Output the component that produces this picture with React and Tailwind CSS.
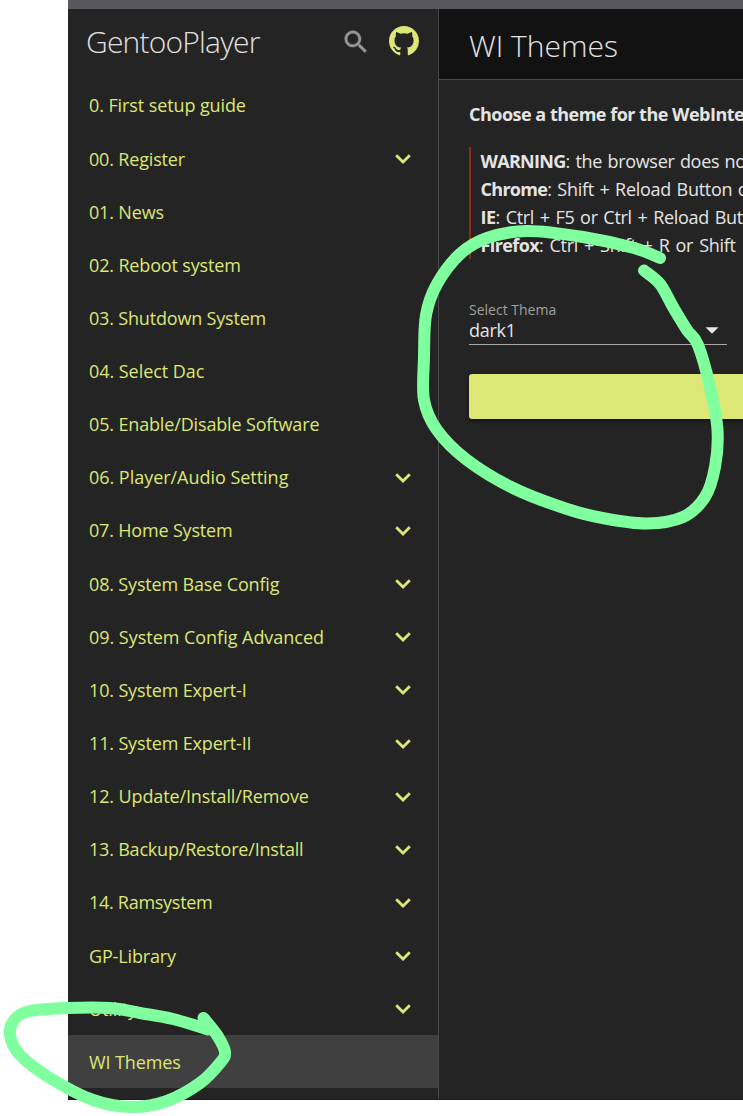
import React from "react";

const items = [
  { label: "0. First setup guide", track: "tracking-[-0.1px]" },
  { label: "00. Register", open: true, track: "tracking-[-0.17px]" },
  { label: "01. News", track: "tracking-[-0.17px]" },
  { label: "02. Reboot system", track: "tracking-[-0.15px]" },
  { label: "03. Shutdown System", track: "tracking-[-0.18px]" },
  { label: "04. Select Dac", track: "tracking-[-0.05px]" },
  { label: "05. Enable/Disable Software", track: "tracking-[-0.15px]" },
  { label: "06. Player/Audio Setting", open: true, track: "tracking-[-0.03px]" },
  { label: "07. Home System", open: true, track: "tracking-[-0.18px]" },
  { label: "08. System Base Config", open: true, track: "tracking-[-0.16px]" },
  { label: "09. System Config Advanced", open: true, track: "tracking-[-0.03px]" },
  { label: "10. System Expert-I", open: true, track: "tracking-[-0.15px]" },
  { label: "11. System Expert-II", open: true, track: "tracking-[-0.15px]" },
  { label: "12. Update/Install/Remove", open: true, track: "tracking-[-0.12px]" },
  { label: "13. Backup/Restore/Install", open: true, track: "tracking-[-0.2px]" },
  { label: "14. Ramsystem", open: true, track: "tracking-[-0.28px]" },
  { label: "GP-Library", open: true, track: "tracking-[-0.15px]" },
  { label: "Utility", open: true, track: "tracking-[-0.1px]" },
  { label: "WI Themes", active: true, track: "tracking-[-0.1px]" },
];

const selectLoop = [
  [660, 258], [634, 248], [583, 237], [527, 231], [487, 238], [460, 254], [437, 284],
  [426, 315], [424, 357], [424, 400], [437, 430], [467, 460], [513, 488], [567, 509],
  [605, 518.5], [647, 523.5], [683, 517], [705, 497], [715, 467], [717.5, 430], [710, 387],
  [698, 345], [687, 330], [673, 307], [660, 284], [644, 270.5],
];

const menuLoop = [
  [208, 1029.5], [173, 1019], [140, 1013], [110, 1008], [67, 1008], [30, 1011], [15, 1019],
  [10, 1035], [20, 1055], [50, 1078], [93, 1100], [132, 1107], [167, 1101], [200, 1083],
  [220, 1063], [225, 1052], [217, 1035], [203.5, 1018],
];

// Smooth curve through every point of a pen stroke.
function smooth(p) {
  let d = `M${p[0][0]} ${p[0][1]}`;
  for (let i = 0; i < p.length - 1; i++) {
    const a = p[i - 1] || p[i];
    const b = p[i];
    const c = p[i + 1];
    const e = p[i + 2] || c;
    d += `C${b[0] + (c[0] - a[0]) / 6} ${b[1] + (c[1] - a[1]) / 6} ${c[0] - (e[0] - b[0]) / 6} ${c[1] - (e[1] - b[1]) / 6} ${c[0]} ${c[1]}`;
  }
  return d;
}

function Chevron() {
  return (
    <svg className="mt-[2px] h-[10px] w-[16px] shrink-0" viewBox="0 0 16 10" fill="none" stroke="#dce775" strokeWidth="2.8">
      <path d="M1.2 1.3L8 8L14.8 1.3" />
    </svg>
  );
}

function Sidebar() {
  return (
    <nav className="box-content flex w-[370px] shrink-0 flex-col border-r border-[#484848]">
      <div className="flex h-[69.3px] shrink-0 items-center pl-[18px]">
        <h1 className="w-[255px] whitespace-nowrap pb-[5px] text-[30px] font-light tracking-[-0.8px] text-[#e0e0e0]">GentooPlayer</h1>
        <svg className="-mt-[4px] h-[30px] w-[30px] shrink-0" viewBox="0 0 24 24" fill="#969696" stroke="#969696" strokeWidth="0.4">
          <path d="M15.5 14h-.79l-.28-.27C15.41 12.59 16 11.11 16 9.5 16 5.91 13.09 3 9.5 3S3 5.91 3 9.5 5.91 16 9.5 16c1.61 0 3.09-.59 4.23-1.57l.27.28v.79l5 4.99L20.49 19l-4.99-5zm-6 0C7.01 14 5 11.99 5 9.5S7.01 5 9.5 5 14 7.01 14 9.5 11.99 14 9.5 14z" />
        </svg>
        <svg className="-mt-[6px] ml-[18px] h-[30px] w-[30px] shrink-0" viewBox="0 0 16 16" fill="#dce775">
          <path d="M8 0C3.58 0 0 3.58 0 8c0 3.54 2.29 6.53 5.47 7.59.4.07.55-.17.55-.38 0-.19-.01-.82-.01-1.49-2.01.37-2.53-.49-2.69-.94-.09-.23-.48-.94-.82-1.13-.28-.15-.68-.52-.01-.53.63-.01 1.08.58 1.23.82.72 1.21 1.87.87 2.33.66.07-.52.28-.87.51-1.07-1.78-.2-3.64-.89-3.64-3.95 0-.87.31-1.59.82-2.15-.08-.2-.36-1.02.08-2.12 0 0 .67-.21 2.2.82.64-.18 1.32-.27 2-.27s1.36.09 2 .27c1.53-1.04 2.2-.82 2.2-.82.44 1.1.16 1.92.08 2.12.51.56.82 1.27.82 2.15 0 3.07-1.87 3.75-3.65 3.95.29.25.54.73.54 1.48 0 1.07-.01 1.93-.01 2.2 0 .21.15.46.55.38A8.01 8.01 0 0 0 16 8c0-4.42-3.58-8-8-8z" />
        </svg>
      </div>
      {items.map((it) => (
        <div
          key={it.label}
          className={
            "flex h-[53.15px] shrink-0 items-center justify-between pl-[21px] pr-[27px] text-[18px] text-[#dce775] " +
            (it.active ? "bg-[#404040]" : "")
          }
        >
          <span className={"whitespace-nowrap pt-[2px] " + it.track}>{it.label}</span>
          {it.open && <Chevron />}
        </div>
      ))}
    </nav>
  );
}

function Main() {
  return (
    <main className="flex min-w-0 flex-1 flex-col overflow-hidden text-[18px] text-[#e4e4e4]">
      <header className="flex h-[71px] shrink-0 items-center border-b border-[#484848] bg-[#121212] pl-[30px]">
        <h2 className="whitespace-nowrap pt-[2px] text-[30px] font-light">WI Themes</h2>
      </header>
      <div className="flex w-[600px] flex-col pl-[30px]">
        <p className="mt-[20px] whitespace-nowrap leading-[28px] font-bold tracking-[-0.5px]">Choose a theme for the WebInterface</p>
        <div className="mt-[19px] h-[112px] whitespace-nowrap border-l-2 border-[#8e2a1a] pl-[9.5px] leading-[28px] tracking-[-0.3px]">
          <p className="[word-spacing:1px]"><b className="font-bold tracking-[-0.7px]">WARNING</b>: the browser does not reload</p>
          <p className="[word-spacing:1.3px]"><b className="font-bold tracking-[-0.7px]">Chrome</b>: Shift + Reload Button or</p>
          <p className="[word-spacing:1.3px]"><b className="font-bold tracking-[-0.5px]">IE</b>: Ctrl + F5 or Ctrl + Reload Button</p>
          <p className="[word-spacing:1.7px]"><b className="font-bold tracking-[-0.6px]">Firefox</b>: Ctrl + Shift + R or Shift</p>
        </div>
        <div className="mt-[40px] flex h-[46px] w-[258px] flex-col border-b border-[#a8a8a8]">
          <label className="text-[14px] leading-[22px] text-[#a0a0a0]">Select Thema</label>
          <div className="-mt-px flex items-center justify-between pr-[8px] leading-[20px]">
            <span className="tracking-[-0.3px]">dark1</span>
            <svg className="mt-px h-[7px] w-[14px]" viewBox="0 0 14 7" fill="#e4e4e4">
              <path d="M0.5 0.3H13.5L7 6.8Z" />
            </svg>
          </div>
        </div>
        <button className="mt-[29px] h-[45px] w-full rounded-[3px] bg-[#dce775] shadow-[0_2px_4px_rgba(0,0,0,0.6)]" aria-label="Apply theme" />
      </div>
    </main>
  );
}

export default function App() {
  return (
    <div className="relative h-[1116px] w-[743px] overflow-hidden bg-white pl-[68px] font-['Open_Sans','Noto_Sans',sans-serif]">
      <div className="flex h-[1100px] flex-col bg-[#242424]">
        <div className="h-[9px] shrink-0 bg-[#57575d]" />
        <div className="flex min-h-0 flex-1 overflow-hidden border-b border-[#1b1b1b]">
          <Sidebar />
          <Main />
        </div>
      </div>
      <svg
        className="pointer-events-none absolute inset-0"
        width="743"
        height="1116"
        fill="none"
        stroke="#80ff9f"
        strokeWidth="12"
        strokeLinecap="round"
        strokeLinejoin="round"
      >
        <path d={smooth(selectLoop)} />
        <path d={smooth(menuLoop)} />
      </svg>
    </div>
  );
}
